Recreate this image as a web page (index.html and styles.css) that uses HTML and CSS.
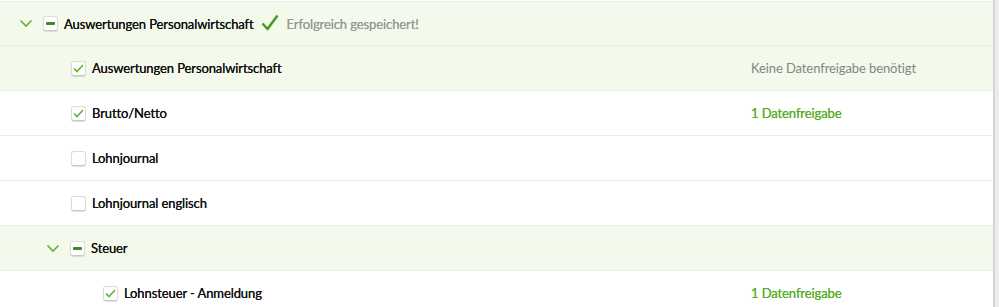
FILE: index.html
```html
<!DOCTYPE html>
<html lang="de">
<head>
  <meta charset="UTF-8">
  <title>Auswertungen</title>
  <link rel="stylesheet" href="styles.css">
</head>
<body>
<div class="page">
  <div class="tree">

    <!-- Gruppe -->
    <div class="row group lvl1">
      <span class="toggle"><svg width="14" height="9" viewBox="0 0 14 9"><path d="M1.5 1.5 L7 7 L12.5 1.5" fill="none" stroke="#63b035" stroke-width="1.6"/></svg></span>
      <span class="box"><span class="minus"></span></span>
      <span class="label">Auswertungen Personalwirtschaft</span>
      <span class="saved">
        <svg width="18" height="17" viewBox="0 0 18 17"><path d="M1.5 9.5 L6.5 15 L16.5 1.5" fill="none" stroke="#4f9a26" stroke-width="2.6" stroke-linejoin="round"/></svg>
        Erfolgreich gespeichert!
      </span>
    </div>

    <div class="row group lvl2">
      <span class="box"><svg class="tick" width="11" height="9" viewBox="0 0 11 9"><path d="M1 4.5 L4 7.5 L10 1" fill="none" stroke="#5db52e" stroke-width="1.6"/></svg></span>
      <span class="label">Auswertungen Personalwirtschaft</span>
      <span class="info muted">Keine Datenfreigabe benötigt</span>
    </div>

    <div class="row lvl2">
      <span class="box"><svg class="tick" width="11" height="9" viewBox="0 0 11 9"><path d="M1 4.5 L4 7.5 L10 1" fill="none" stroke="#5db52e" stroke-width="1.6"/></svg></span>
      <span class="label">Brutto/Netto</span>
      <span class="info ok">1 Datenfreigabe</span>
    </div>

    <div class="row lvl2">
      <span class="box"></span>
      <span class="label">Lohnjournal</span>
    </div>

    <div class="row lvl2">
      <span class="box"></span>
      <span class="label">Lohnjournal englisch</span>
    </div>

    <!-- Untergruppe -->
    <div class="row group lvl2 sub">
      <span class="toggle"><svg width="14" height="9" viewBox="0 0 14 9"><path d="M1.5 1.5 L7 7 L12.5 1.5" fill="none" stroke="#63b035" stroke-width="1.6"/></svg></span>
      <span class="box"><span class="minus"></span></span>
      <span class="label">Steuer</span>
    </div>

    <div class="row lvl3">
      <span class="box"><svg class="tick" width="11" height="9" viewBox="0 0 11 9"><path d="M1 4.5 L4 7.5 L10 1" fill="none" stroke="#5db52e" stroke-width="1.6"/></svg></span>
      <span class="label">Lohnsteuer - Anmeldung</span>
      <span class="info ok">1 Datenfreigabe</span>
    </div>

  </div>
  <div class="scroll"></div>
</div>
</body>
</html>
```

FILE: styles.css
```css
*{box-sizing:border-box}
body{margin:0;background:#fff;font-family:'Lato','Noto Sans',sans-serif;font-size:13px;letter-spacing:-.1px;color:#111;overflow:hidden}
.page{display:flex;height:307px}
.tree{flex:1;padding-top:1px}
.scroll{width:6px;background:#ececec;border-left:2px solid #d5d5d5}

.row{display:flex;align-items:center;height:45px;border-bottom:1px solid #ebebeb;position:relative}
.row:first-child{border-top:1px solid #ebebeb;height:45px}
.group{background:#f3f9eb}

.lvl1{padding-left:19px}
.lvl2{padding-left:71px}
.lvl2.sub{padding-left:46px}
.lvl3{padding-left:103px}

.toggle{width:24px;display:flex;align-items:center}
.box{width:15px;height:15px;border:1px solid #dcdcdc;border-bottom-color:#c8c8c8;border-radius:3px;background:#fff;box-shadow:0 1px 1px rgba(0,0,0,.12);display:flex;align-items:center;justify-content:center;margin-right:6px;flex:none}
.minus{width:9px;height:3px;background:#3f8a1f;border-radius:1px}
.tick{margin-top:1px}

.label{white-space:nowrap;text-shadow:0 0 .4px #111}
.saved{display:flex;align-items:center;gap:8px;margin-left:7px;color:#999;text-shadow:0 0 .4px #999}
.saved svg{margin-top:-2px}

.info{position:absolute;left:751px;white-space:nowrap}
.muted{color:#858585}
.ok{color:#5aae2a;text-shadow:0 0 .4px #5aae2a}
```
